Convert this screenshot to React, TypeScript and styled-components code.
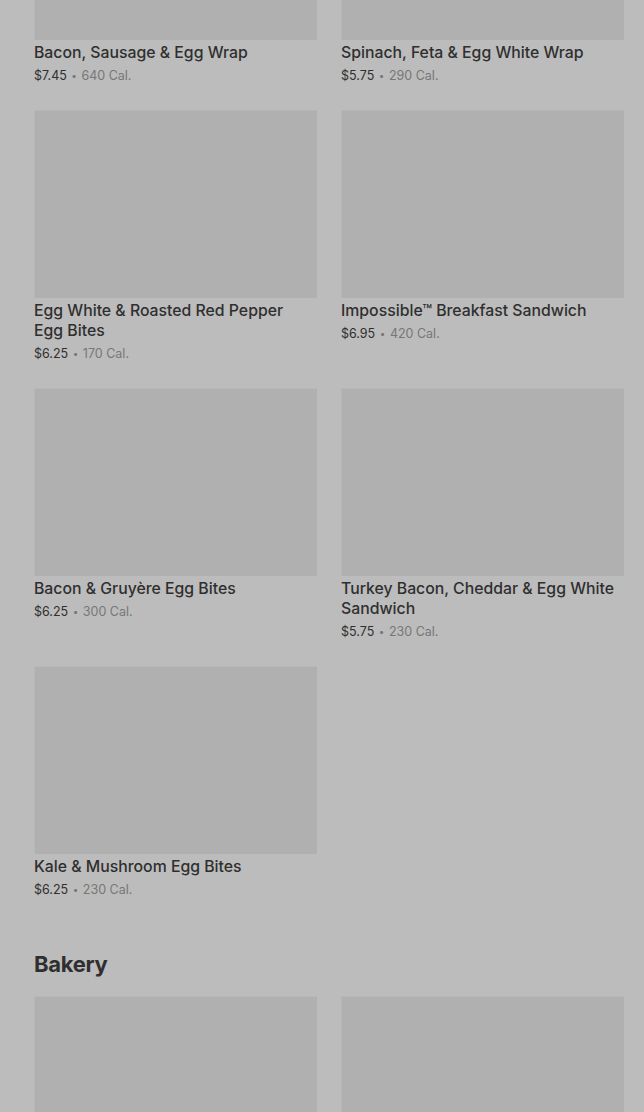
import React from "react";
import styled, { createGlobalStyle } from "styled-components";

const GlobalStyle = createGlobalStyle`
  html, body {
    margin: 0;
    padding: 0;
    background: #bcbcbc;
    overflow: hidden;
  }
  body {
    font-family: Inter, "Noto Sans", "Liberation Sans", sans-serif;
    color: #2f2f2f;
    -webkit-font-smoothing: antialiased;
  }
`;

type Item = {
  name: string;
  price: string;
  cal: string;
};

const breakfast: Item[] = [
  { name: "Bacon, Sausage & Egg Wrap", price: "$7.45", cal: "640 Cal." },
  { name: "Spinach, Feta & Egg White Wrap", price: "$5.75", cal: "290 Cal." },
  { name: "Egg White & Roasted Red Pepper Egg Bites", price: "$6.25", cal: "170 Cal." },
  { name: "Impossible™ Breakfast Sandwich", price: "$6.95", cal: "420 Cal." },
  { name: "Bacon & Gruyère Egg Bites", price: "$6.25", cal: "300 Cal." },
  { name: "Turkey Bacon, Cheddar & Egg White Sandwich", price: "$5.75", cal: "230 Cal." },
  { name: "Kale & Mushroom Egg Bites", price: "$6.25", cal: "230 Cal." },
];

// the list is scrolled partway into the breakfast section
const Page = styled.main`
  padding: 0 20px 0 34px;
  margin-top: -148px;
`;

const Grid = styled.div`
  display: grid;
  grid-template-columns: 283px 283px;
  column-gap: 24px;
  row-gap: 24px;
  align-items: start;
`;

const Card = styled.div`
  display: flex;
  flex-direction: column;
`;

const Thumb = styled.div`
  height: 188px;
  background: #b0b0b0;
  box-shadow: inset 1px 1px 0 #b7b7b7;
`;

const Name = styled.div`
  margin-top: 3px;
  padding-right: 8px;
  font-size: 15.8px;
  line-height: 20px;
  font-weight: 500;
  color: #2f2f2f;
`;

const Meta = styled.div`
  margin-top: 3px;
  font-size: 12.5px;
  line-height: 20px;
  height: 20px;
  color: #2f2f2f;
`;

const Cal = styled.span`
  color: #777777;
`;

const Dot = styled.span`
  color: #777777;
  font-size: 10px;
  line-height: 0;
  vertical-align: 1px;
  margin: 0 1px;
`;

const SectionTitle = styled.h2`
  margin: 48px 0 16px;
  font-size: 22px;
  line-height: 32px;
  font-weight: 700;
  color: #2f2f2f;
  letter-spacing: -0.3px;
`;

const MenuCard = ({ item }: { item: Item }) => (
  <Card>
    <Thumb />
    <Name>{item.name}</Name>
    <Meta>
      {item.price} <Dot>•</Dot> <Cal>{item.cal}</Cal>
    </Meta>
  </Card>
);

export default function App() {
  return (
    <>
      <GlobalStyle />
      <Page>
        <Grid>
          {breakfast.map((item) => (
            <MenuCard key={item.name} item={item} />
          ))}
        </Grid>
        <SectionTitle>Bakery</SectionTitle>
        <Grid>
          <Card>
            <Thumb />
          </Card>
          <Card>
            <Thumb />
          </Card>
        </Grid>
      </Page>
    </>
  );
}
